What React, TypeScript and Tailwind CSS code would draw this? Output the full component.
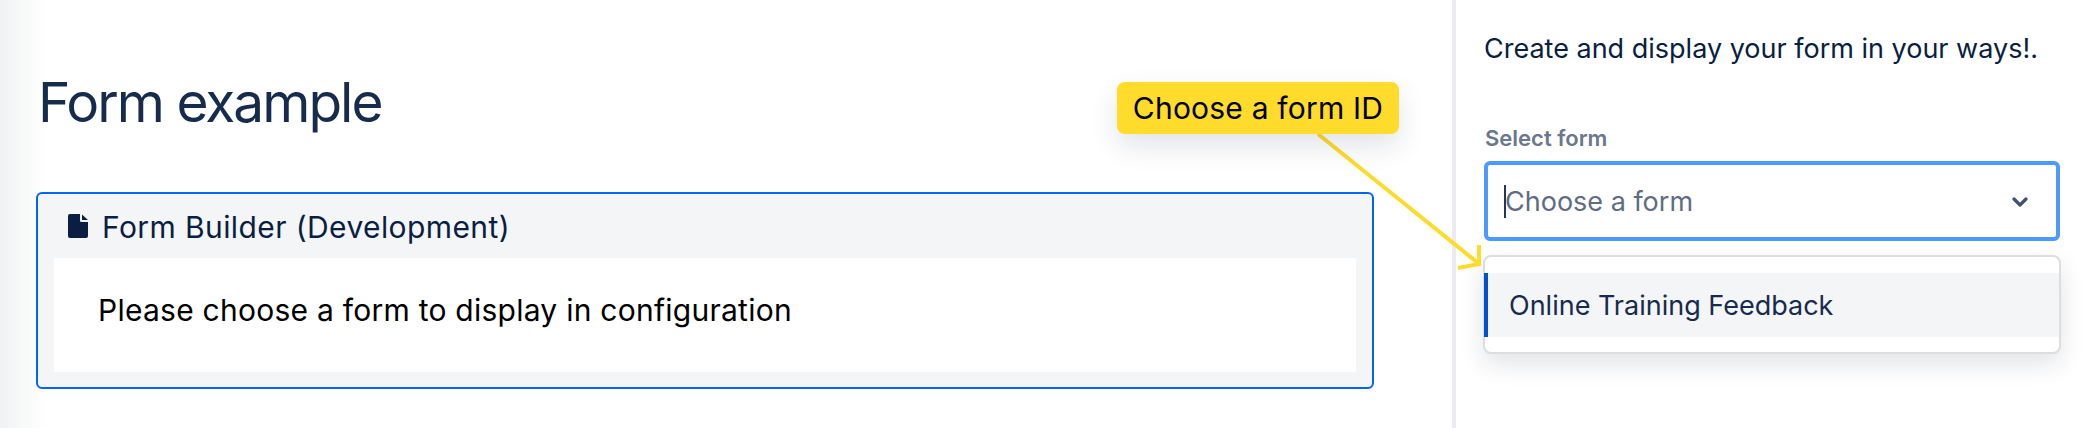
const font = "font-['Inter','Noto_Sans',sans-serif]"

function DocIcon() {
  return (
    <svg width="20" height="24" viewBox="0 0 20 24" className="shrink-0">
      <path
        d="M2 0h10v6.5A1.5 1.5 0 0 0 13.5 8H20v14a2 2 0 0 1-2 2H2a2 2 0 0 1-2-2V2a2 2 0 0 1 2-2z M14 0.5L20 6h-6z"
        fill="#091e42"
      />
    </svg>
  )
}

function Chevron() {
  return (
    <svg width="16" height="12" viewBox="0 0 16 12" fill="none">
      <path d="M2 4l6 6 6-6" stroke="#42526e" strokeWidth="3.2" strokeLinecap="round" strokeLinejoin="round" />
    </svg>
  )
}

export default function App() {
  return (
    <div className={`relative flex h-[428px] w-[2088px] overflow-hidden bg-white ${font}`}>
      <main className="w-[1452px] shrink-0 bg-gradient-to-r from-[#f1f2f3] to-white to-[47px] pl-[36px] pt-[66px]">
        <h1 className="pl-[2px] text-[55px] leading-[72px] tracking-[-2px] text-[#172b4d]">Form example</h1>
        <section className="mt-[54px] h-[197px] w-[1338px] rounded-md border-2 border-[#0065ff] bg-[#f4f5f7] px-[16px]">
          <div className="flex h-[64px] items-center gap-[14px] pl-[14px]">
            <DocIcon />
            <span className="pt-[2px] text-[30px] tracking-[0.4px] text-[#091e42]">Form Builder (Development)</span>
          </div>
          <div className="h-[114px] bg-white pl-[44px] pt-[33px]">
            <p className="text-[30px] leading-[38px] tracking-[0.25px] text-black">
              Please choose a form to display in configuration
            </p>
          </div>
        </section>
      </main>

      <aside className="flex-1 border-l-4 border-[#ebecf0] pl-[28px] pt-[29px]">
        <p className="whitespace-nowrap text-[27px] leading-[40px] text-[#091e42]">
          Create and display your form in your ways!.
        </p>
        <label className="mt-[53px] block pl-[1px] text-[22px] font-semibold leading-[32px] text-[#6b778c]">
          Select form
        </label>
        <div className="mt-[7px] flex h-[80px] w-[576px] items-center justify-between rounded-[6px] border-4 border-[#4c9aff] pl-[16px] pr-[28px]">
          <div className="flex items-center">
            <span className="h-[33px] w-[2px] bg-[#253858]" />
            <span className="-ml-[1px] pt-[2px] text-[27px] text-[#5e6c84]">Choose a form</span>
          </div>
          <Chevron />
        </div>
      </aside>

      <div className="absolute left-[1483px] top-[255px] h-[99px] w-[578px] rounded-lg border-2 border-[#dedede] bg-white py-[16px] shadow-[0_10px_24px_rgba(9,30,66,0.12)]">
        <div className="-ml-[1px] flex h-[64px] items-center border-l-[4px] border-[#0052cc] bg-[#f4f5f7] pl-[21px] pt-[2px] text-[27px] text-[#172b4d]">
          Online Training Feedback
        </div>
      </div>

      <svg className="absolute left-0 top-0" width="2088" height="428" fill="none">
        <path d="M1318 134L1478 263M1479 245V264L1458 268" stroke="#ffdb2b" strokeWidth="4" />
      </svg>

      <div className="absolute left-[1117px] top-[82px] flex h-[52px] w-[282px] items-center justify-center rounded-lg bg-[#ffdb2b] text-[30px] tracking-[0.2px] text-black shadow-[0_12px_28px_rgba(9,30,66,0.12)]">
        Choose a form ID
      </div>
    </div>
  )
}
